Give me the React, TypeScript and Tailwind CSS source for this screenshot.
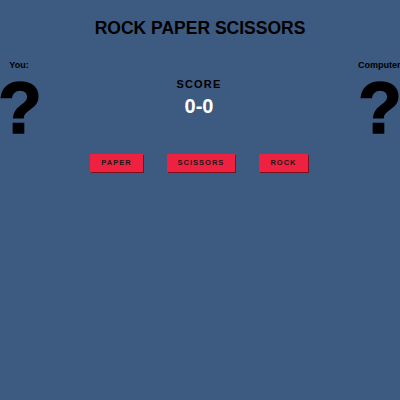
export default function App() {
  const choices = [
    { label: "PAPER", w: "w-[53px]" },
    { label: "SCISSORS", w: "w-[68px]" },
    { label: "ROCK", w: "w-[49px]" },
  ];

  return (
    <div className="relative h-[400px] w-[400px] overflow-hidden bg-[#3d5a80] font-['Liberation_Sans',Arial,sans-serif] text-black">
      <h1 className="pt-[17px] text-center text-[17.5px] font-bold leading-[22px]">ROCK PAPER SCISSORS</h1>

      <div className="mt-[20px] flex justify-between">
        <div className="flex w-[40px] flex-col items-center">
          <p className="ml-[-2px] text-[9px] font-bold leading-[12px]">You:</p>
          <span className="mt-[3px] text-[72px] font-bold leading-[68px] [-webkit-text-stroke:1.5px_black]">?</span>
        </div>

        <div className="flex flex-col items-center pt-[18px]">
          <p className="text-[11px] font-bold leading-[14px] tracking-[1.2px]">SCORE</p>
          <p className="mt-[3px] text-[20px] font-bold leading-[24px] text-white">0-0</p>
          <div className="mt-[36px] flex gap-[24px]">
            {choices.map((c) => (
              <button
                key={c.label}
                className={`${c.w} h-[18px] bg-[#ee2240] text-[7.5px] font-bold tracking-[1px] text-[#1a1a1a] shadow-[1px_1px_0_#7a1020]`}
              >
                {c.label}
              </button>
            ))}
          </div>
        </div>

        <div className="flex w-[42px] flex-col">
          <p className="whitespace-nowrap text-[9px] font-bold leading-[12px]">Computer:</p>
          <span className="mt-[3px] text-[72px] font-bold leading-[68px] [-webkit-text-stroke:1.5px_black]">?</span>
        </div>
      </div>
    </div>
  );
}
